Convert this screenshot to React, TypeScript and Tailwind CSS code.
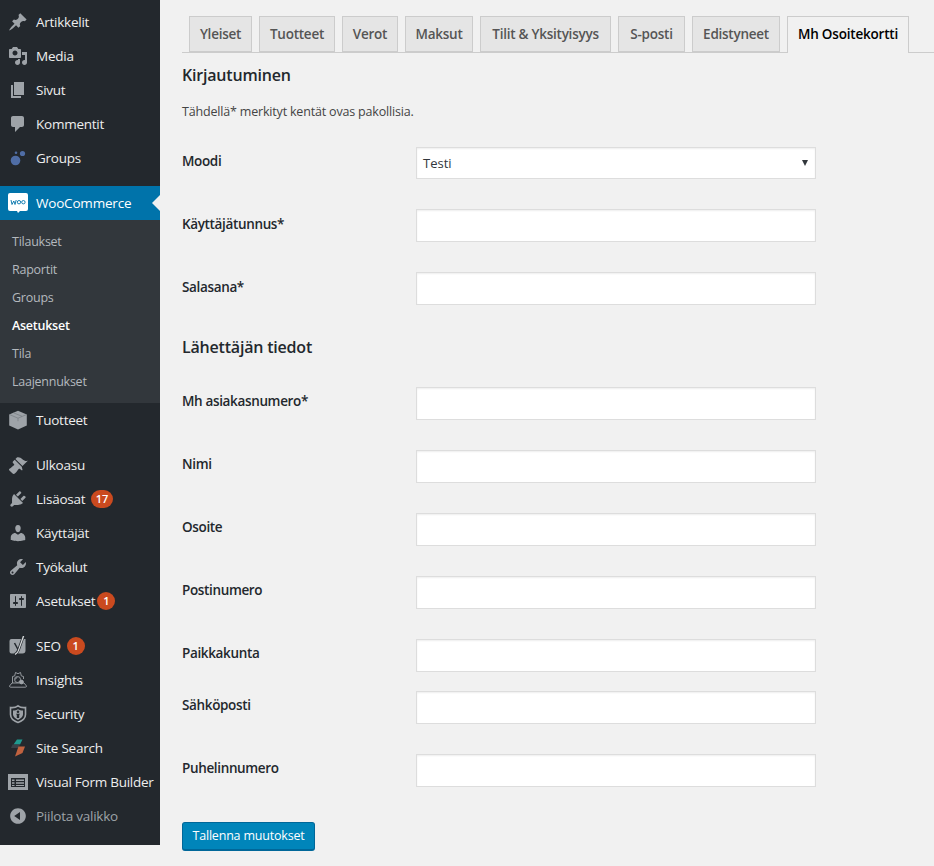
import type { ReactNode } from "react";

const font = "font-['Open_Sans','Noto_Sans',sans-serif]";

const dash = (d: string) => (
  <svg viewBox="0 0 20 20" className="w-5 h-5" fill="#9ea3a8">
    <path d={d} />
  </svg>
);

const icons: Record<string, ReactNode> = {
  post: dash("M10.44 3.02l1.82-1.82 6.36 6.35-1.83 1.82c-1.05-.68-2.48-.57-3.41.36l-.75.75c-.92.93-1.04 2.35-.35 3.41l-1.83 1.82-2.41-2.41-2.8 2.79c-.42.42-3.38 2.71-3.8 2.29s1.86-3.39 2.28-3.81l2.79-2.79L4.1 9.36l1.83-1.82c1.05.69 2.48.57 3.4-.36l.75-.75c.93-.92 1.05-2.35.36-3.41z"),
  media: dash("M13 11V4c0-.55-.45-1-1-1h-1.67L9 1H5L3.67 3H2c-.55 0-1 .45-1 1v7c0 .55.45 1 1 1h10c.55 0 1-.45 1-1zM7 4.5c1.38 0 2.5 1.12 2.5 2.5S8.38 9.5 7 9.5 4.5 8.38 4.5 7 5.62 4.5 7 4.5zM14 6h5v10.5c0 1.38-1.12 2.5-2.5 2.5S14 17.88 14 16.5s1.12-2.5 2.5-2.5c.17 0 .34.02.5.05V9h-3V6zm-4 8.05V13h2v3.5c0 1.38-1.12 2.5-2.5 2.5S7 17.88 7 16.5 8.12 14 9.5 14c.17 0 .34.02.5.05z"),
  page: dash("M6 15V2h10v13H6zm-1 1h8v2H3V5h2v11z"),
  comments: dash("M5 2h9c1.1 0 2 .9 2 2v7c0 1.1-.9 2-2 2h-2l-5 5v-5H5c-1.1 0-2-.9-2-2V4c0-1.1.9-2 2-2z"),
  groups: (
    <svg viewBox="0 0 20 20" className="w-5 h-5" fill="#4f6da5">
      <circle cx="7.5" cy="12.5" r="4.8" />
      <circle cx="14.5" cy="5.5" r="2.6" />
      <circle cx="8" cy="4.8" r="1.3" />
    </svg>
  ),
  woo: (
    <svg viewBox="0 0 20 20" className="w-5 h-5">
      <path fill="#fff" d="M2 0h16a2 2 0 0 1 2 2v14a2 2 0 0 1-2 2h-6l-2 2-1-2H2a2 2 0 0 1-2-2V2a2 2 0 0 1 2-2z" />
      <path fill="none" stroke="#0073aa" strokeWidth="0.9" d="M3 7l1 4.5L5.8 8l1.2 3.5L8.2 7" />
      <circle cx="11" cy="9.2" r="1.7" fill="none" stroke="#0073aa" strokeWidth="0.9" />
      <circle cx="15.4" cy="9.2" r="1.7" fill="none" stroke="#0073aa" strokeWidth="0.9" />
    </svg>
  ),
  box: (
    <svg viewBox="0 0 20 20" className="w-5 h-5">
      <path fill="#9ea3a8" d="M10 .8l8.8 3.600v11.200L10 19.400 1.200 15.600V4.400z" />
      <path fill="none" stroke="#6f757b" strokeWidth="0.6" d="M1.600 4.600L10 8.200l8.400-3.600M5.500 2.800l8.500 3.500M10 8.200v3" />
    </svg>
  ),
  appearance: dash("M14.48 11.06L7.41 3.99l1.5-1.5c.5-.56 2.3-.47 3.51.32 1.21.8 1.43 1.28 2.91 2.1 1.18.64 2.45 1.26 4.45.85zm-.71.71L6.7 4.7 4.93 6.47c-.39.39-.39 1.02 0 1.41l1.06 1.06c.39.39.39 1.03 0 1.42-.6.6-1.43 1.11-2.21 1.69-.35.26-.7.53-1.01.84C1.43 13.23.4 14.4 1.4 15.4l3.2 3.2c1 1 2.17-.03 3.54-1.4.31-.31.58-.66.84-1.01.58-.78 1.09-1.61 1.69-2.21.39-.39 1.03-.39 1.42 0l1.06 1.06c.39.39 1.02.39 1.41 0z"),
  plugins: dash("M13.11 4.36L9.87 7.6 8 5.73l3.24-3.24c.35-.34 1.05-.2 1.56.32.52.51.66 1.21.31 1.55zm-8 1.77l.91-1.12 9.01 9.01-1.19.84c-.71.71-2.63 1.16-3.82 1.16H6.14L4.9 17.26c-.59.59-1.54.59-2.12 0-.59-.58-.59-1.53 0-2.12l1.24-1.24v-3.88c0-1.13.4-3.19 1.09-3.89zm7.26 3.97l3.24-3.24c.34-.35 1.04-.21 1.55.31.52.51.66 1.21.31 1.55l-3.24 3.25z"),
  users: dash("M10 9.25c-2.27 0-2.73-3.44-2.73-3.44C7 4.02 7.82 2 9.97 2c2.16 0 2.98 2.02 2.71 3.81 0 0-.41 3.44-2.68 3.44zm0 2.57L12.72 10c2.39 0 4.52 2.33 4.52 4.53v2.49s-3.65 1.13-7.24 1.13c-3.65 0-7.24-1.13-7.24-1.13v-2.49c0-2.25 1.94-4.48 4.47-4.48z"),
  tools: dash("M16.68 9.77c-1.34 1.34-3.3 1.67-4.95.99l-5.41 6.52c-.99.99-2.59.99-3.58 0s-.99-2.59 0-3.57l6.52-5.42c-.68-1.65-.35-3.61.99-4.95 1.28-1.28 3.12-1.62 4.72-1.06l-2.89 2.89 2.82 2.82 2.86-2.87c.53 1.58.18 3.39-1.08 4.65zM3.81 16.21c.4.39 1.04.39 1.43 0 .4-.4.4-1.04 0-1.43-.39-.4-1.03-.4-1.43 0-.39.39-.39 1.03 0 1.43z"),
  settings: dash("M18 16V4c0-.55-.45-1-1-1H3c-.55 0-1 .45-1 1v12c0 .55.45 1 1 1h14c.55 0 1-.45 1-1zM8 11h1c.55 0 1 .45 1 1s-.45 1-1 1H8v1.5c0 .28-.22.5-.5.5s-.5-.22-.5-.5V13H6c-.55 0-1-.45-1-1s.45-1 1-1h1V5.5c0-.28.22-.5.5-.5s.5.22.5.5V11zm5-2h-1c-.55 0-1-.45-1-1s.45-1 1-1h1V5.5c0-.28.22-.5.5-.5s.5.22.5.5V7h1c.55 0 1 .45 1 1s-.45 1-1 1h-1v5.5c0 .28-.22.5-.5.5s-.5-.22-.5-.5V9z"),
  seo: (
    <svg viewBox="0 0 20 20" className="w-5 h-5">
      <path fill="#9ea3a8" d="M3.500 3h14v11.500a3 3 0 0 1-3 3H3.500a2 2 0 0 1-2-2V5a2 2 0 0 1 2-2z" />
      <path fill="none" stroke="#23282d" strokeWidth="1.500" d="M6.500 7l3.500 6.500" />
      <path fill="none" stroke="#23282d" strokeWidth="2.600" d="M15.500 0L10.500 14c-.6 1.800-1.600 3.400-3.800 4.500" />
      <path fill="#d5d8da" d="M14.800 0h1.500L11 14.500c-.6 1.800-1.700 3.400-3.700 4.500l-.6-1.100c1.800-1 2.700-2.200 3.300-3.900z" />
    </svg>
  ),
  insights: (
    <svg viewBox="0 0 20 20" className="w-5 h-5" fill="none" stroke="#9ea3a8" strokeWidth="0.9">
      <path d="M4.500 13V6.500l2.200-.6L7.500 2.500l2.500 1.200 2.500-1.200.8 3.400 2.200.6v2.500" />
      <path d="M1.500 16l2.500-3h12l2.500 3c0 .8-.4 1.200-1 1.200h-15c-.6 0-1-.4-1-1.200z" />
      <circle cx="9.500" cy="9.500" r="3" />
      <path d="M7.500 9.500a2 2 0 0 1 2-2" />
      <circle cx="13.500" cy="12" r="1.900" fill="#9ea3a8" />
    </svg>
  ),
  security: (
    <svg viewBox="0 0 20 20" className="w-5 h-5">
      <path fill="none" stroke="#9ea3a8" strokeWidth="1.600" d="M2.500 3.500c3 .4 5.500-.2 7.500-1.700 2 1.500 4.500 2.100 7.500 1.700v7c0 3.500-3.500 6.500-7.500 8-4-1.500-7.500-4.500-7.500-8z" />
      <path fill="#9ea3a8" d="M5 6.500c2 0 3.800-.4 5-1.300 1.200.9 3 1.300 5 1.300v4c0 2.200-2.200 4.200-5 5.400-2.800-1.200-5-3.200-5-5.400z" />
      <circle cx="10" cy="7.800" r="1.300" fill="#23282d" />
      <path fill="#23282d" d="M8 9.800h4l-.8 1.200v3h-2.400v-3z" />
    </svg>
  ),
  search: (
    <svg viewBox="0 0 20 20" className="w-5 h-5">
      <path fill="#1f9a8f" d="M9 1.500h5.500L12 6.500H5.500z" />
      <path fill="#3a4148" d="M4.500 6.500H12l-1.500 3.500H3z" />
      <path fill="#c0623f" d="M10.500 8.500H17l-2.500 6.500-7.500 3.500z" />
    </svg>
  ),
  form: (
    <svg viewBox="0 0 20 20" className="w-5 h-5">
      <rect y="2" width="20" height="16" fill="#9ea3a8" />
      <rect x="3" y="6" width="14" height="9" fill="#23282d" />
      <path fill="#9ea3a8" d="M4 7.500h2.500v1.500H4zM8 7.500h8v1.500H8zM4 10.300h2.500v1.500H4zM8 10.300h8v1.500H8zM4 13h2.500v1H4zM8 13h8v1H8z" />
    </svg>
  ),
  collapse: dash("M10 2.160c4.330 0 7.840 3.510 7.840 7.840s-3.510 7.840-7.840 7.840S2.160 14.330 2.160 10 5.710 2.160 10 2.160zm2 11.720V6.120L6.180 9.970z"),
};

function MenuItem({ icon, label, badge, tight, dim }: { icon: string; label: string; badge?: string; tight?: boolean; dim?: boolean }) {
  return (
    <div className={`flex items-center h-[34px] pl-2 text-[13.500px] ${dim ? "text-[#9ea3a8]" : "text-[#eeeeee]"}`}>
      <span className="w-5 h-5 mr-2 shrink-0">{icons[icon]}</span>
      <span className="whitespace-nowrap tracking-[-0.25px]">{label}</span>
      {badge && (
        <span className={`${tight ? "ml-[2px]" : "ml-[6px]"} h-[18px] min-w-[18px] px-[4.500px] rounded-full bg-[#ca4a1f] text-white text-[11px] font-semibold flex items-center justify-center`}>
          {badge}
        </span>
      )}
    </div>
  );
}

const subItems = ["Tilaukset", "Raportit", "Groups", "Asetukset", "Tila", "Laajennukset"];

function Sidebar() {
  return (
    <aside className="w-40 h-[845px] shrink-0 bg-[#23282d] pt-[5px]">
      <MenuItem icon="post" label="Artikkelit" />
      <MenuItem icon="media" label="Media" />
      <MenuItem icon="page" label="Sivut" />
      <MenuItem icon="comments" label="Kommentit" />
      <MenuItem icon="groups" label="Groups" />
      <div className="relative flex items-center h-[34px] mt-[11px] pl-2 bg-[#0073aa] text-white text-[13.500px] font-medium">
        <span className="w-5 h-5 mr-2 shrink-0">{icons.woo}</span>
        <span className="tracking-[-0.2px]">WooCommerce</span>
        <span className="absolute right-0 top-[9px] border-y-8 border-r-8 border-y-transparent border-r-[#f1f1f1]" />
      </div>
      <div className="bg-[#32373c] pt-2 pb-[7px]">
        {subItems.map((s) => (
          <div
            key={s}
            className={`h-7 pl-3 flex items-center text-[12.500px] tracking-[-0.25px] ${s === "Asetukset" ? "text-white font-semibold" : "text-[#b4b9be]"}`}
          >
            {s}
          </div>
        ))}
      </div>
      <MenuItem icon="box" label="Tuotteet" />
      <div className="h-[11px]" />
      <MenuItem icon="appearance" label="Ulkoasu" />
      <MenuItem icon="plugins" label="Lisäosat" badge="17" />
      <MenuItem icon="users" label="Käyttäjät" />
      <MenuItem icon="tools" label="Työkalut" />
      <MenuItem icon="settings" label="Asetukset" badge="1" tight />
      <div className="h-[11px]" />
      <MenuItem icon="seo" label="SEO" badge="1" />
      <MenuItem icon="insights" label="Insights" />
      <MenuItem icon="security" label="Security" />
      <MenuItem icon="search" label="Site Search" />
      <MenuItem icon="form" label="Visual Form Builder" />
      <MenuItem icon="collapse" label="Piilota valikko" dim />
    </aside>
  );
}

const tabs = [
  { label: "Yleiset", w: "w-[63px]" },
  { label: "Tuotteet", w: "w-[76px]" },
  { label: "Verot", w: "w-[56px]" },
  { label: "Maksut", w: "w-[68px]" },
  { label: "Tilit & Yksityisyys", w: "w-[131px]" },
  { label: "S-posti", w: "w-[67px]" },
  { label: "Edistyneet", w: "w-[88px]" },
];

function Tabs() {
  return (
    <div className="flex gap-[7px] h-9 pl-[7px] border-b border-[#cccccc] box-content -mb-px">
      {tabs.map((t) => (
        <div
          key={t.label}
          className={`${t.w} h-9 border border-[#cccccc] bg-[#e5e5e5] text-[#555555] text-[13.500px] font-semibold tracking-[-0.25px] flex items-center justify-center whitespace-nowrap`}
        >
          {t.label}
        </div>
      ))}
      <div className="w-[122px] h-[37px] border border-b-0 border-[#cccccc] bg-[#f1f1f1] text-black text-[13.500px] font-semibold tracking-[-0.2px] flex items-center justify-center whitespace-nowrap pb-px">
        Mh Osoitekortti
      </div>
    </div>
  );
}

function Row({ label, mb, top }: { label: string; mb: string; top?: boolean }) {
  return (
    <div className={`flex ${mb}`}>
      <label className={`w-[234px] shrink-0 ${top ? "pt-[5px]" : "pt-1"} text-[13.500px] font-semibold tracking-[-0.35px] text-[#23282d]`}>{label}</label>
      <input className="w-[400px] h-[33px] bg-white border border-[#dddddd] shadow-[inset_0_1px_2px_rgba(0,0,0,0.07)] outline-none" />
    </div>
  );
}

export default function App() {
  return (
    <div className={`${font} flex h-[866px] overflow-hidden bg-[#f1f1f1]`}>
      <Sidebar />
      <main className="flex-1 pl-[22px] pt-4">
        <Tabs />
        <h2 className="mt-3 text-[16px] leading-[22px] font-semibold tracking-[-0.2px] text-[#23282d]">Kirjautuminen</h2>
        <p className="mt-[17px] text-[12.500px] leading-[18px] tracking-[-0.18px] text-[#444444]">Tähdellä* merkityt kentät ovas pakollisia.</p>
        <div className="flex mt-[26px] mb-[30px]">
          <label className="w-[234px] shrink-0 pt-[4px] text-[13.500px] font-semibold tracking-[-0.35px] text-[#23282d]">Moodi</label>
          <div className="relative w-[400px] h-[32px] bg-white border border-[#dddddd] shadow-[inset_0_1px_2px_rgba(0,0,0,0.07)] flex items-center pl-[6px] pt-[2px] text-[13px] text-[#32373c]">
            Testi
            <span className="absolute right-[7px] top-[12px] border-x-[3.500px] border-t-[6px] border-x-transparent border-t-[#32373c]" />
          </div>
        </div>
        <Row label="Käyttäjätunnus*" mb="mb-[30px]" top />
        <Row label="Salasana*" mb="mb-[31px]" top />
        <h2 className="mb-[29px] text-[16px] leading-[22px] font-semibold tracking-[-0.2px] text-[#23282d]">Lähettäjän tiedot</h2>
        <Row label="Mh asiakasnumero*" mb="mb-[30px]" />
        <Row label="Nimi" mb="mb-[30px]" />
        <Row label="Osoite" mb="mb-[30px]" />
        <Row label="Postinumero" mb="mb-[30px]" />
        <Row label="Paikkakunta" mb="mb-[19px]" />
        <Row label="Sähköposti" mb="mb-[30px]" />
        <Row label="Puhelinnumero" mb="mb-[35px]" />
        <button className="w-[133px] h-[29px] rounded-[3px] bg-[#0085ba] border border-[#006799] border-b-2 text-white text-[12.500px] tracking-[-0.2px]">
          Tallenna muutokset
        </button>
      </main>
    </div>
  );
}
